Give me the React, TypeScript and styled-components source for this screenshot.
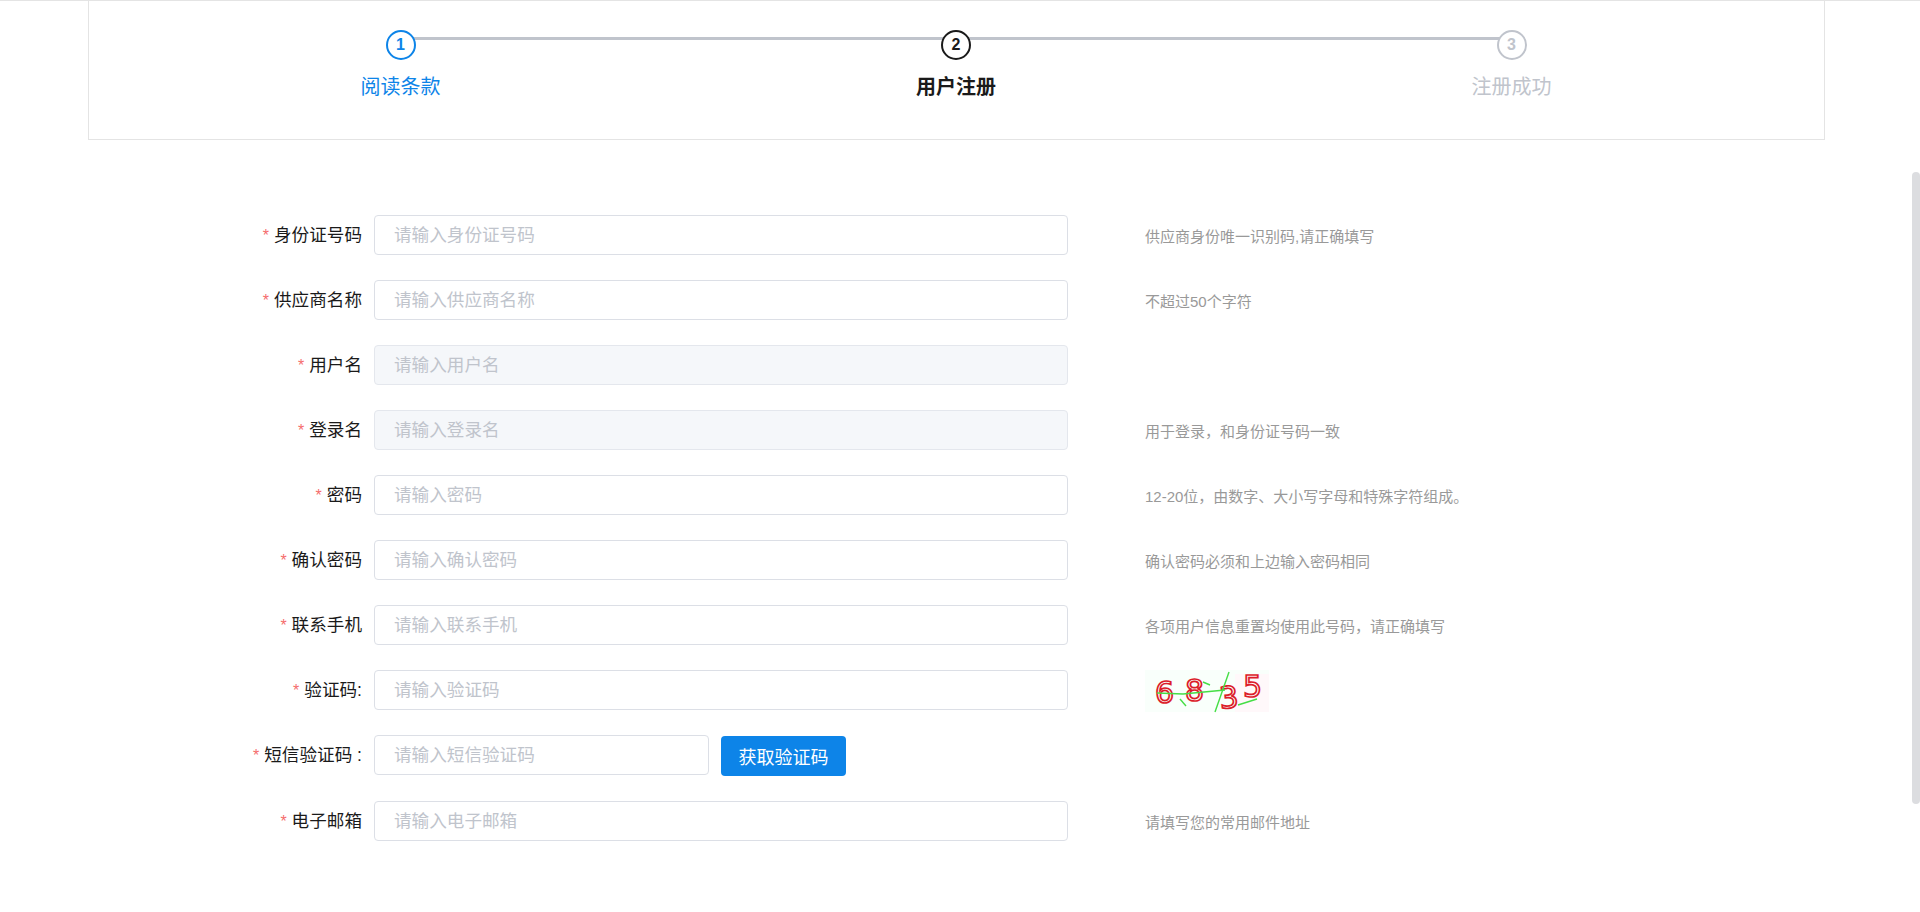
import { FC } from "react"
import styled, { createGlobalStyle } from "styled-components"

const FONT_STACK = `"Liberation Sans", "Noto Sans CJK SC", sans-serif`

const GlobalStyle = createGlobalStyle`
  html, body {
    margin: 0;
    height: 100%;
    overflow: hidden;
    background: #fff;
    font-family: ${FONT_STACK};
  }
  * {
    box-sizing: border-box;
  }
`

const Page = styled.div`
  display: flex;
  height: 912px;
  border-top: 1px solid #e4e4e4;
`

const Main = styled.main`
  flex: 1;
  min-width: 0;
  overflow: hidden;
`

const ScrollTrack = styled.div`
  width: 8px;
  flex: none;
`

const ScrollThumb = styled.div`
  width: 8px;
  height: 632px;
  margin-top: 171px;
  border-radius: 4px;
  background: #dcdde0;
`

const StepsPanel = styled.section`
  width: 1737px;
  height: 139px;
  margin-left: 88px;
  padding: 29px 1px 0 0;
  border: 1px solid #e4e4e4;
  border-top: 0;
  display: flex;
  justify-content: center;
`

type StepState = "done" | "current" | "pending"

const stepColor = (state: StepState) =>
  state === "done" ? "#0d84e8" : state === "current" ? "#1a1a1a" : "#c0c4cc"

const Step = styled.div`
  position: relative;
  width: 555.5px;
  display: flex;
  flex-direction: column;
  align-items: center;
`

const StepLine = styled.div`
  position: absolute;
  top: 7px;
  left: 50%;
  width: 100%;
  height: 3px;
  background: #c0c4cc;
`

const StepCircle = styled.div<{ state: StepState }>`
  position: relative;
  width: 30px;
  height: 30px;
  border-radius: 50%;
  border: 2px solid ${({ state }) => stepColor(state)};
  background: #fff;
  color: ${({ state }) => stepColor(state)};
  font-size: 16px;
  font-weight: 700;
  line-height: 26px;
  text-align: center;
`

const StepTitle = styled.div<{ state: StepState }>`
  margin-top: 13px;
  font-size: 20px;
  line-height: 28px;
  color: ${({ state }) => stepColor(state)};
  font-weight: ${({ state }) => (state === "current" ? 700 : 400)};
`

const Form = styled.form`
  margin: 75px 0 0 88px;
`

const Row = styled.div<{ $tall?: boolean }>`
  display: flex;
  align-items: ${({ $tall }) => ($tall ? "flex-start" : "center")};
  height: ${({ $tall }) => ($tall ? "41px" : "40px")};
  margin-bottom: 25px;
`

const Label = styled.label`
  flex: none;
  width: 274px;
  margin-right: 12px;
  text-align: right;
  font-size: 17.6px;
  line-height: 40px;
  color: #1a1a1a;
  white-space: nowrap;
`

const Star = styled.span`
  margin-right: 5px;
  color: #f56c6c;
  font-size: 16px;
`

const Input = styled.input<{ $short?: boolean }>`
  flex: none;
  width: ${({ $short }) => ($short ? "335px" : "694px")};
  height: 40px;
  padding: 0 19px;
  border: 1px solid #dcdfe6;
  border-radius: 4px;
  background: #fff;
  font-family: inherit;
  font-size: 17.6px;
  outline: none;

  &:disabled {
    background: #f5f7fa;
    border-color: #e4e7ed;
  }

  &::placeholder {
    color: #c0c4cc;
    opacity: 1;
  }
`

const SmsButton = styled.button`
  flex: none;
  width: 125px;
  height: 40px;
  margin: 1px 0 0 12px;
  padding: 0;
  border: 0;
  border-radius: 4px;
  background: #0d84e8;
  color: #fff;
  font-family: inherit;
  font-size: 18px;
`

const Hint = styled.div`
  margin-left: 77px;
  padding-top: 1px;
  font-size: 15px;
  color: #999;
  white-space: nowrap;
`

const CaptchaFrame = styled.div`
  align-self: flex-start;
  margin-left: 77px;
  width: 124px;
  height: 48px;
`

// the captcha is a noisy generated image in the page, redrawn here with real digits
const Captcha: FC = () => (
  <CaptchaFrame>
    <svg width="124" height="48" viewBox="0 0 124 48">
      <rect width="124" height="42" fill="#f9fffb" />
      <rect x="90" y="4" width="34" height="38" fill="#fff8fa" />
      <g
        fontFamily="'DejaVu Sans', sans-serif"
        fontSize="30"
        fill="none"
        stroke="#dc1c2a"
        strokeWidth="1.7"
      >
        <text x="10" y="33">6</text>
        <text x="40" y="31">8</text>
        <text x="74" y="38" transform="rotate(-5 84 25)">3</text>
        <text x="98" y="27">5</text>
      </g>
      <g stroke="#45de45" strokeWidth="1.4" fill="none">
        <path d="M12 23 L38 24" />
        <path d="M38 24 L80 20" />
        <path d="M84 2 L70 42" />
        <path d="M35 29 L41 36" />
        <path d="M58 12 L65 15" />
        <path d="M93 35 L112 29" />
      </g>
    </svg>
  </CaptchaFrame>
)

interface IField {
  label: string
  placeholder: string
  hint?: string
  disabled?: boolean
}

const fields: IField[] = [
  { label: "身份证号码", placeholder: "请输入身份证号码", hint: "供应商身份唯一识别码,请正确填写" },
  { label: "供应商名称", placeholder: "请输入供应商名称", hint: "不超过50个字符" },
  { label: "用户名", placeholder: "请输入用户名", disabled: true },
  { label: "登录名", placeholder: "请输入登录名", hint: "用于登录，和身份证号码一致", disabled: true },
  { label: "密码", placeholder: "请输入密码", hint: "12-20位，由数字、大小写字母和特殊字符组成。" },
  { label: "确认密码", placeholder: "请输入确认密码", hint: "确认密码必须和上边输入密码相同" },
  { label: "联系手机", placeholder: "请输入联系手机", hint: "各项用户信息重置均使用此号码，请正确填写" },
]

const steps: { title: string; state: StepState }[] = [
  { title: "阅读条款", state: "done" },
  { title: "用户注册", state: "current" },
  { title: "注册成功", state: "pending" },
]

const FieldLabel: FC<{ text: string }> = ({ text }) => (
  <Label>
    <Star>*</Star>
    {text}
  </Label>
)

export default function App() {
  return (
    <Page>
      <GlobalStyle />
      <Main>
        <StepsPanel>
          {steps.map((step, index) => (
            <Step key={step.title}>
              {index < steps.length - 1 && <StepLine />}
              <StepCircle state={step.state}>{index + 1}</StepCircle>
              <StepTitle state={step.state}>{step.title}</StepTitle>
            </Step>
          ))}
        </StepsPanel>
        <Form>
          {fields.map((field) => (
            <Row key={field.label}>
              <FieldLabel text={field.label} />
              <Input placeholder={field.placeholder} disabled={field.disabled} />
              {field.hint && <Hint>{field.hint}</Hint>}
            </Row>
          ))}
          <Row>
            <FieldLabel text="验证码:" />
            <Input placeholder="请输入验证码" />
            <Captcha />
          </Row>
          <Row $tall>
            <FieldLabel text="短信验证码 :" />
            <Input $short placeholder="请输入短信验证码" />
            <SmsButton type="button">获取验证码</SmsButton>
          </Row>
          <Row>
            <FieldLabel text="电子邮箱" />
            <Input placeholder="请输入电子邮箱" />
            <Hint>请填写您的常用邮件地址</Hint>
          </Row>
        </Form>
      </Main>
      <ScrollTrack>
        <ScrollThumb />
      </ScrollTrack>
    </Page>
  )
}
